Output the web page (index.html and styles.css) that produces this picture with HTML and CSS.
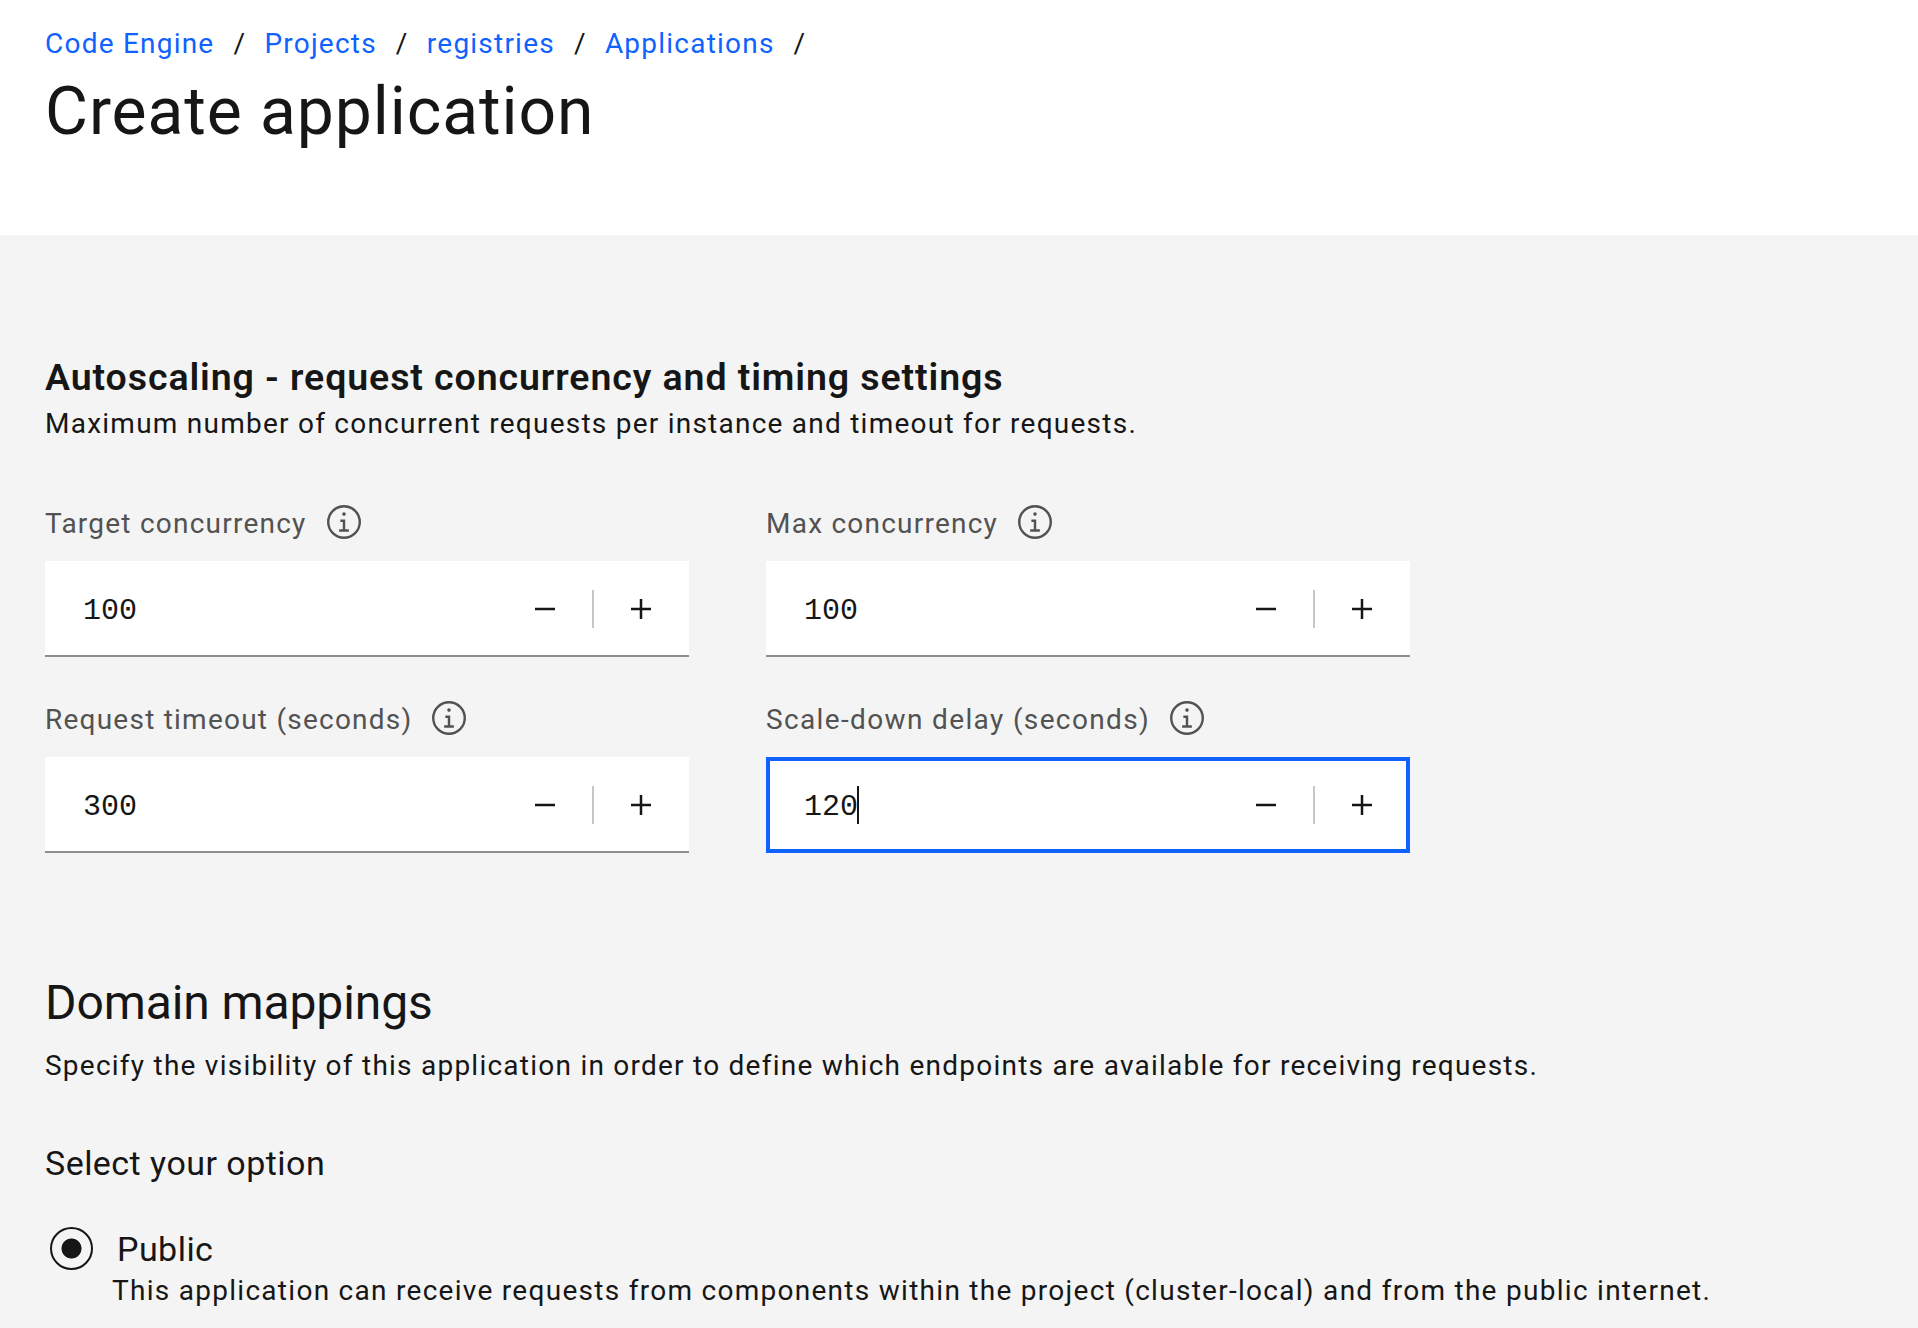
FILE: index.html
```html
<!DOCTYPE html>
<html lang="en">
<head>
<meta charset="utf-8">
<title>Create application</title>
<link rel="stylesheet" href="styles.css">
</head>
<body>
<svg class="sprite" aria-hidden="true">
  <symbol id="info" viewBox="2 2 28 28"><path d="M17 22V14h-4v2h2v6h-3v2h8v-2zM16 8a1.5 1.5 0 1 0 1.5 1.5A1.5 1.5 0 0 0 16 8z"/><path d="M16 30a14 14 0 1 1 14-14 14 14 0 0 1-14 14zm0-26a12 12 0 1 0 12 12A12 12 0 0 0 16 4z"/></symbol>
  <symbol id="minus" viewBox="0 0 32 32"><path d="M8 15h16v2H8z"/></symbol>
  <symbol id="plus" viewBox="0 0 32 32"><path d="M17 15V8h-2v7H8v2h7v7h2v-7h7v-2z"/></symbol>
</svg>
<header class="header">
  <nav class="crumbs">
    <a class="crumb">Code Engine</a><span class="slash">/</span>
    <a class="crumb">Projects</a><span class="slash">/</span>
    <a class="crumb">registries</a><span class="slash">/</span>
    <a class="crumb">Applications</a><span class="slash">/</span>
  </nav>
  <h1 class="title">Create application</h1>
</header>
<main class="main">
  <h3 class="subheading">Autoscaling - request concurrency and timing settings</h3>
  <p class="text">Maximum number of concurrent requests per instance and timeout for requests.</p>
  <div class="fields">
    <div class="field">
      <div class="label"><span class="label-text">Target concurrency</span><svg class="info"><use href="#info"/></svg></div>
      <div class="number"><span class="value">100</span><svg class="step"><use href="#minus"/></svg><i class="rule"></i><svg class="step"><use href="#plus"/></svg></div>
    </div>
    <div class="field">
      <div class="label"><span class="label-text">Max concurrency</span><svg class="info"><use href="#info"/></svg></div>
      <div class="number"><span class="value">100</span><svg class="step"><use href="#minus"/></svg><i class="rule"></i><svg class="step"><use href="#plus"/></svg></div>
    </div>
    <div class="field">
      <div class="label"><span class="label-text">Request timeout (seconds)</span><svg class="info"><use href="#info"/></svg></div>
      <div class="number"><span class="value">300</span><svg class="step"><use href="#minus"/></svg><i class="rule"></i><svg class="step"><use href="#plus"/></svg></div>
    </div>
    <div class="field">
      <div class="label label-wide"><span class="label-text">Scale-down delay (seconds)</span><svg class="info"><use href="#info"/></svg></div>
      <div class="number focused"><span class="value">120</span><i class="caret"></i><svg class="step"><use href="#minus"/></svg><i class="rule"></i><svg class="step"><use href="#plus"/></svg></div>
    </div>
  </div>
  <h2 class="heading">Domain mappings</h2>
  <p class="text">Specify the visibility of this application in order to define which endpoints are available for receiving requests.</p>
  <p class="legend">Select your option</p>
  <div class="option"><i class="radio"></i><span class="option-name">Public</span></div>
  <p class="text option-text">This application can receive requests from components within the project (cluster-local) and from the public internet.</p>
</main>
</body>
</html>
```
FILE: styles.css
```css
* { box-sizing: border-box; }
body {
  margin: 0;
  height: 1328px;
  overflow: hidden;
  background: #f4f4f4;
  color: #161616;
  font: 400 28px/36px Roboto, "Liberation Sans", sans-serif;
  letter-spacing: 1.24px;
}
h1, h2, h3, p { margin: 0; font-weight: 400; white-space: nowrap; }
.sprite { display: none; }
svg { fill: currentColor; flex: none; }

.header { height: 235px; padding: 26px 45px 0; background: #fff; }
.crumbs { display: flex; height: 36px; }
.crumb { color: #0f62fe; letter-spacing: 1.22px; }
.slash { width: 10px; margin: 0 21px 0 19px; letter-spacing: 0; }
.title { margin-top: 10px; font-size: 66px; line-height: 80px; letter-spacing: .92px; }

.main { padding: 118px 45px 0; }
.subheading { font-size: 37.5px; font-weight: 600; line-height: 48px; letter-spacing: .91px; margin-bottom: 5px; }
.fields { display: grid; grid-template-columns: 644px 644px; column-gap: 77px; row-gap: 44px; margin-top: 63px; }
.label { display: flex; gap: 20px; height: 36px; margin-bottom: 20px; color: #525252; letter-spacing: 1.23px; }
.label-text { padding-top: 1px; line-height: 35px; }
.label-wide { letter-spacing: 1.36px; }
.info { width: 34px; height: 34px; }
.number {
  display: flex;
  align-items: center;
  height: 96px;
  padding: 2px 28px 0 38px;
  background: #fff;
  border-bottom: 2px solid #8d8d8d;
}
.value { padding-top: 3px; font: 30px/36px "Liberation Mono", monospace; letter-spacing: 0; }
.caret { width: 2px; height: 38px; margin-left: -1px; background: #161616; }
.step { width: 40px; height: 40px; }
.value ~ .step { margin-left: auto; }
.rule { width: 2px; height: 38px; margin: 0 27px; background: #c6c6c6; }
.rule + .step.step { margin-left: 0; }
.focused { border: 4px solid #0f62fe; padding: 0 24px 0 34px; }

.heading { margin: 120px 0 15px; font-size: 48px; line-height: 60px; letter-spacing: -.1px; }
.legend { margin-top: 59px; font-size: 34px; line-height: 40px; letter-spacing: .46px; }
.option { display: flex; align-items: center; height: 43px; margin-top: 44px; padding-left: 5px; }
.radio {
  width: 43px;
  height: 43px;
  margin-right: 24px;
  border: 2px solid #161616;
  border-radius: 50%;
  background: radial-gradient(circle, #161616 9.6px, transparent 10.4px);
}
.option-name { font-size: 34px; line-height: 40px; letter-spacing: .46px; }
.option-text { margin: 3px 0 0 67px; letter-spacing: 1.28px; }
```
